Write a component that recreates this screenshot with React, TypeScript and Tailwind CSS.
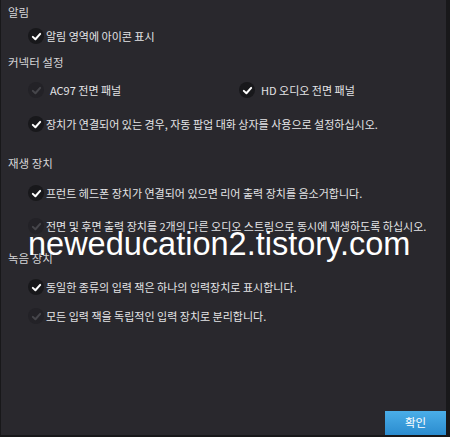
const font = { fontFamily: '"Noto Sans CJK KR", "Noto Sans", sans-serif' };

const Check = ({ disabled = false }: { disabled?: boolean }) => (
  <span
    className={
      "flex h-[16px] w-[16px] shrink-0 items-center justify-center rounded-full " +
      (disabled ? "bg-[#232227]" : "bg-[#18181b]")
    }
  >
    <svg width="11" height="11" viewBox="0 0 12 12">
      <path
        d="M2 6.4 L4.8 9 L10 3.2"
        fill="none"
        stroke={disabled ? "#46464b" : "#ffffff"}
        strokeWidth="2.2"
        strokeLinecap="round"
        strokeLinejoin="round"
      />
    </svg>
  </span>
);

const Heading = ({ children, className = "" }: { children: string; className?: string }) => (
  <div className={"flex h-[22px] items-center pl-[7px] text-[11.5px] text-[#d6d6d8] " + className}>
    {children}
  </div>
);

const Row = ({
  children,
  className = "",
  disabled = false,
}: {
  children: string;
  className?: string;
  disabled?: boolean;
}) => (
  <div className={"flex h-[22px] items-center gap-[2px] pl-[27px] text-[11px] text-[#e4e4e6] " + className}>
    <Check disabled={disabled} />
    <span>{children}</span>
  </div>
);

export default function App() {
  return (
    <div
      className="relative flex h-[437px] w-[450px] flex-col overflow-hidden border-b-2 border-l border-r-4 border-[#18181a] bg-[#29282d] pt-[2px]"
      style={font}
    >
      <Heading>알림</Heading>
      <Row className="mt-[1px]">알림 영역에 아이콘 표시</Row>

      <Heading className="mt-[5px]">커넥터 설정</Heading>
      <div className="mt-[5px] flex h-[22px] items-center text-[11px] text-[#e4e4e6]">
        <div className="flex w-[238px] items-center gap-[6px] pl-[27px]">
          <Check disabled />
          <span>AC97 전면 패널</span>
        </div>
        <div className="flex items-center gap-[6px]">
          <Check />
          <span>HD 오디오 전면 패널</span>
        </div>
      </div>
      <Row className="mt-[12px]">장치가 연결되어 있는 경우, 자동 팝업 대화 상자를 사용으로 설정하십시오.</Row>

      <Heading className="mt-[18px]">재생 장치</Heading>
      <Row className="mt-[7px]">프런트 헤드폰 장치가 연결되어 있으면 리어 출력 장치를 음소거합니다.</Row>
      <Row className="mt-[11px]" disabled>
        전면 및 후면 출력 장치를 2개의 다른 오디오 스트림으로 동시에 재생하도록 하십시오.
      </Row>

      <Heading className="mt-[11px]">녹음 장치</Heading>
      <Row className="mt-[6px]">동일한 종류의 입력 잭은 하나의 입력장치로 표시합니다.</Row>
      <Row className="mt-[7px]" disabled>
        모든 입력 잭을 독립적인 입력 장치로 분리합니다.
      </Row>

      <div className="mt-auto flex justify-end">
        <button className="h-[24px] w-[61px] bg-gradient-to-b from-[#4aaee8] to-[#2b8ccf] text-[11.5px] text-white">
          확인
        </button>
      </div>

      {/* watermark over the panel */}
      <div
        className="pointer-events-none absolute left-[27px] top-[228px] text-[32.5px] leading-none text-white"
        style={{ fontFamily: '"Liberation Sans", Arial, sans-serif' }}
      >
        neweducation2.tistory.com
      </div>
    </div>
  );
}
